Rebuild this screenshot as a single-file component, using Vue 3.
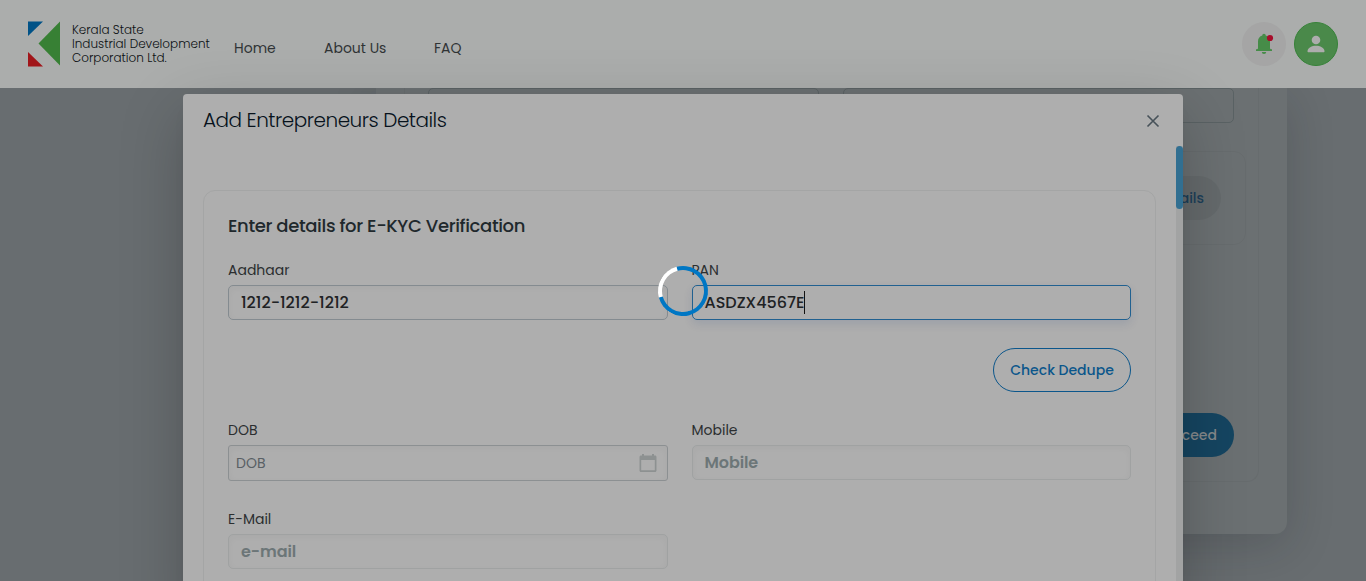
<script setup>
const links = [
  { label: 'Home', cls: 'home' },
  { label: 'About Us', cls: 'about' },
  { label: 'FAQ', cls: 'faq' },
]
</script>

<template>
  <div class="screen">
    <header class="topbar">
      <svg class="logo" width="32" height="46" viewBox="0 0 32 46">
        <path d="M0 0.5H15L0 15Z" fill="#005287" />
        <path d="M0 31L15 45.5H0Z" fill="#a11519" />
        <path d="M32 0.5V44.5L10.5 22.5Z" fill="#378034" />
      </svg>
      <div class="brand">
        <span>Kerala State</span>
        <span>Industrial Development</span>
        <span>Corporation Ltd.</span>
      </div>
      <nav class="nav">
        <a v-for="l in links" :key="l.label" :class="l.cls">{{ l.label }}</a>
      </nav>
      <div class="actions">
        <div class="round bell">
          <svg width="44" height="44" viewBox="0 0 44 44">
            <path d="M22 11.8c1 0 1.700.7 1.700 1.700 2.700.8 4.300 3 4.300 5.900V26.500l.8.800h1.200V29H14v-1.700h1.200l.8-.8V19.400c0-2.900 1.600-5.100 4.300-5.900 0-1 .7-1.700 1.700-1.700z" fill="#468c48" />
            <path d="M19.800 30h4.400a2.200 2 0 0 1-4.400 0z" fill="#468c48" />
            <circle cx="28" cy="16" r="3.100" fill="#a80c2a" />
          </svg>
        </div>
        <div class="round user">
          <svg width="42" height="42" viewBox="0 0 42 42">
            <circle cx="21" cy="17" r="4.300" fill="#adadad" />
            <path d="M12.500 28.300c0-3.500 4.500-5.500 8.500-5.500s8.500 2 8.500 5.500c0 .6-.5 1-1 1h-15c-.5 0-1-.4-1-1z" fill="#adadad" />
          </svg>
        </div>
      </div>
    </header>

    <main class="page">
      <section class="sheet">
        <div class="panel">
          <div class="fields"><div class="slot"></div><div class="slot"></div></div>
          <div class="group"><button class="details">Add Details</button></div>
          <button class="proceed">Proceed</button>
        </div>
      </section>
    </main>

    <div class="modal">
      <div class="modal-head">
        <h2>Add Entrepreneurs Details</h2>
        <svg width="14" height="14" viewBox="0 0 14 14">
          <path d="M1.500 1.500L12.500 12.500M12.500 1.500L1.500 12.500" stroke="#475159" stroke-width="1.650" fill="none" />
        </svg>
      </div>
      <div class="modal-body">
        <div class="form">
          <h3>Enter details for E-KYC Verification</h3>
          <div class="grid first">
            <div class="field">
              <label>Aadhaar</label>
              <div class="input"><span>1212-1212-1212</span></div>
            </div>
            <div class="field">
              <label>PAN</label>
              <div class="input focus"><span>ASDZX4567E</span><i class="caret"></i></div>
            </div>
          </div>
          <div class="row-end"><button class="check">Check Dedupe</button></div>
          <div class="grid second">
            <div class="field">
              <label>DOB</label>
              <div class="input date">
                <span>DOB</span>
                <svg width="18" height="18" viewBox="0 0 18 18">
                  <path d="M3 0h2v1.500h8V0h2v1.500h1c.8 0 1.500.7 1.500 1.500v13.500c0 .8-.7 1.500-1.500 1.500H2C1.200 18 .5 17.300.5 16.500V3C.5 2.200 1.200 1.500 2 1.500h1zM2.200 6v10.300h13.600V6z" fill="#8d9191" fill-rule="evenodd" />
                </svg>
              </div>
            </div>
            <div class="field">
              <label>Mobile</label>
              <div class="input muted"><span>Mobile</span></div>
            </div>
            <div class="field">
              <label>E-Mail</label>
              <div class="input muted"><span>e-mail</span></div>
            </div>
          </div>
        </div>
        <div class="track"><div class="thumb"></div></div>
      </div>
    </div>

    <div class="spinner"></div>
  </div>
</template>

<style>
body { background: #686d70; }
</style>

<style scoped>
* { box-sizing: border-box; }
.screen {
  position: relative;
  width: 1366px;
  height: 581px;
  overflow: hidden;
  background: #686d70;
  color: #24292c;
  font-family: Poppins, Inter, sans-serif;
  font-size: 14px;
}
button { font: inherit; border: 0; padding: 0; }
.topbar {
  height: 88px;
  display: flex;
  align-items: center;
  padding: 0 28px;
  background: #abadac;
}
.logo { flex: none; }
.brand {
  display: flex;
  flex-direction: column;
  align-items: flex-start;
  width: 150px;
  margin-left: 12px;
  font-size: 12px;
  line-height: 14px;
  font-weight: 300;
  color: #0b1013;
  white-space: nowrap;
}
.nav { display: flex; margin-top: 7px; line-height: 20px; white-space: nowrap; color: #303436; }
.nav a { margin-left: 12px; }
.nav .home { width: 78px; }
.nav .about { width: 98px; }
.actions { display: flex; gap: 8px; margin-left: auto; }
.round { width: 44px; height: 44px; border-radius: 50%; display: flex; }
.bell { background: #a5a5a5; }
.user { background: #4a894a; border: 1px solid #368238; }

.page { height: 493px; overflow: hidden; padding-left: 376px; }
.sheet {
  width: 911px;
  height: 446px;
  padding: 0 28px;
  border-radius: 0 0 12px 12px;
  background: #6b7072;
  box-shadow: 0 12px 48px rgba(20, 25, 28, .2);
}
.panel {
  height: 394px;
  padding: 0 24px;
  border: 1px solid #676c6e;
  border-top: 0;
  border-radius: 0 0 12px 12px;
  display: flex;
  flex-direction: column;
  align-items: flex-end;
}
.fields { display: flex; gap: 24px; width: 806px; }
.slot { flex: 1; height: 35px; border: 1px solid #5a6264; border-radius: 5px; }
.group {
  width: 830px;
  height: 94px;
  margin: 28px -12px 0 0;
  padding: 24px 24px;
  border: 1px solid rgba(0, 0, 0, .03);
  border-radius: 12px;
  display: flex;
  justify-content: flex-end;
}
.details {
  width: 128px;
  height: 44px;
  border-radius: 22px;
  padding-right: 17px;
  text-align: right;
  background: rgba(0, 0, 0, .05);
  color: #1c3f59;
  font-weight: 500;
}
.proceed {
  width: 100px;
  height: 44px;
  margin-top: 168px;
  border-radius: 22px;
  padding-right: 17px;
  text-align: right;
  background: #154561;
  color: #85898b;
  font-weight: 500;
}

.modal {
  position: absolute;
  left: 183px;
  top: 94px;
  width: 1000px;
  height: 520px;
  border-radius: 4px 4px 0 0;
  background: #aeaeae;
  box-shadow: 0 11px 15px -7px rgba(0, 0, 0, .1), 0 20px 64px rgba(0, 0, 0, .22);
}
.modal-head {
  height: 52px;
  display: flex;
  justify-content: space-between;
  align-items: center;
  padding: 1px 23px 0 20px;
}
h2 { margin: -2px 0 0; font-size: 20px; line-height: 30px; font-weight: 300; letter-spacing: -.48px; color: #07121c; }
.modal-body { display: flex; justify-content: space-between; height: 468px; }
.form {
  width: 953px;
  margin: 44px 0 0 20px;
  padding: 21px 24px;
  border: 1px solid #a4a5a5;
  border-radius: 12px;
}
h3 { margin: 0; font-size: 18px; line-height: 27px; font-weight: 500; letter-spacing: -.36px; color: #20282c; white-space: nowrap; }
.grid { display: grid; grid-template-columns: 1fr 1fr; column-gap: 24px; }
.first { margin-top: 21px; }
.field { display: flex; flex-direction: column; }
label { height: 25px; line-height: 20px; color: #2b2e30; }
.input {
  height: 35px;
  display: flex;
  align-items: center;
  padding-left: 12px;
  border: 1px solid #848b90;
  border-radius: 5px;
  font-size: 16px;
  font-weight: 500;
  color: #202224;
  box-shadow: inset 0 2px 7px rgba(0, 0, 0, .03);
}
.focus { border-color: #216190; box-shadow: 0 4px 10px rgba(0, 50, 120, .11); }
.caret { width: 1px; height: 23px; background: #111; }
.date {
  height: 36px;
  justify-content: space-between;
  padding: 0 10px 0 7px;
  border-radius: 3px;
  border-color: #8c9092;
  font-size: 14px;
  font-weight: 400;
  color: #596065;
}
.muted { border-color: #a0a2a2; color: #6c7678; font-weight: 600; letter-spacing: -.1px; }
.row-end { display: flex; justify-content: flex-end; margin-top: 28px; }
.check {
  width: 138px;
  height: 44px;
  border: 1px solid #0b568b;
  border-radius: 22px;
  background: transparent;
  color: #0b568b;
  font-weight: 500;
}
.second { margin-top: 28px; row-gap: 28px; }
.track { width: 7px; background: #a2a3a3; }
.thumb { height: 63px; border-radius: 3.500px; background: #316f91; }
.spinner {
  position: absolute;
  left: 658px;
  top: 266px;
  width: 50px;
  height: 50px;
  border: 4px solid #0077c4;
  border-left-color: #fff;
  border-radius: 50%;
  transform: rotate(30deg);
}
</style>
